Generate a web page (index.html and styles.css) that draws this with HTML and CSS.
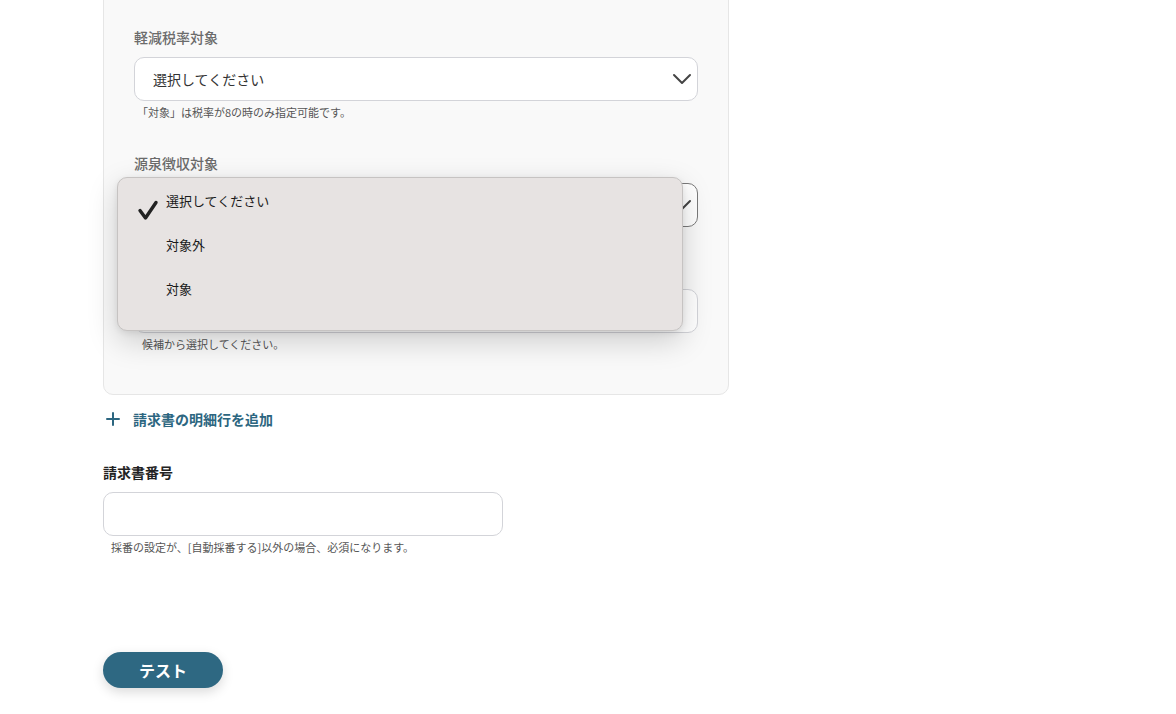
FILE: index.html
```html
<!DOCTYPE html>
<html lang="ja">
<head>
<meta charset="utf-8">
<link rel="stylesheet" href="styles.css">
</head>
<body>
<div class="page">
  <div class="card">
    <div class="group">
      <div class="label">軽減税率対象</div>
      <div class="select">
        <span>選択してください</span>
        <svg class="chev" width="20" height="14" viewBox="0 0 20 14"><path d="M2 3 L10 11 L18 3" fill="none" stroke="#444" stroke-width="2" stroke-linecap="round" stroke-linejoin="round"/></svg>
      </div>
      <div class="hint first">「対象」は税率が8の時のみ指定可能です。</div>
    </div>
    <div class="group g2">
      <div class="label">源泉徴収対象</div>
      <div class="select focused">
        <svg class="chev" width="20" height="14" viewBox="0 0 20 14"><path d="M2 3 L10 11 L18 3" fill="none" stroke="#444" stroke-width="2" stroke-linecap="round" stroke-linejoin="round"/></svg>
        <div class="menu">
          <div class="item checked">
            <svg class="check" width="22" height="22" viewBox="0 0 22 22"><path d="M3 11.5 L8.5 19 L19 3.5" fill="none" stroke="#222" stroke-width="3.4" stroke-linecap="round" stroke-linejoin="round"/></svg>
            <span>選択してください</span>
          </div>
          <div class="item"><span>対象外</span></div>
          <div class="item"><span>対象</span></div>
        </div>
      </div>
    </div>
    <div class="group g3">
      <div class="label hidden">勘定科目</div>
      <div class="select plain"></div>
      <div class="hint">候補から選択してください。</div>
    </div>
  </div>

  <div class="add">
    <svg width="14" height="14" viewBox="0 0 14 14"><path d="M7 1 V13 M1 7 H13" stroke="#2c6680" stroke-width="2" stroke-linecap="round"/></svg>
    <span>請求書の明細行を追加</span>
  </div>

  <div class="field">
    <div class="label strong">請求書番号</div>
    <div class="select input"></div>
    <div class="hint">採番の設定が、[自動採番する]以外の場合、必須になります。</div>
  </div>

  <button class="btn">テスト</button>
</div>
</body>
</html>
```
FILE: styles.css
```css
* { box-sizing: border-box; }
html, body { margin: 0; padding: 0; background: #fff; }
body {
  font-family: "Noto Sans CJK JP", "Noto Sans", sans-serif;
  color: #333;
  width: 1176px;
  height: 714px;
  overflow: hidden;
}
.page {
  padding-left: 103px;
  display: flex;
  flex-direction: column;
  align-items: flex-start;
}
.card {
  width: 626px;
  margin-top: -20px;
  padding: 46px 30px 42px 30px;
  background: #f9f9f9;
  border: 1px solid #e6e6e6;
  border-radius: 10px;
  display: flex;
  flex-direction: column;
}
.group { display: flex; flex-direction: column; }
.g2 { margin-top: 33px; }
.g3 { margin-top: 32px; }
.label {
  font-size: 14px;
  line-height: 20px;
  font-weight: 500;
  color: #6b6b6b;
  margin-bottom: 10px;
}
.label.hidden { visibility: hidden; }
.label.strong { color: #222; font-weight: 700; }
.select {
  position: relative;
  height: 44px;
  background: #fff;
  border: 1px solid #d3d4d9;
  border-radius: 10px;
  display: flex;
  align-items: center;
  padding-left: 18px;
  font-size: 14px;
  color: #333;
}
.select.focused { border-color: #7a7a7a; }
.chev { position: absolute; right: 5px; top: 14px; }
.hint {
  margin-top: 3px;
  padding-left: 8px;
  font-size: 11px;
  line-height: 16px;
  color: #555;
}
.hint.first { padding-left: 3px; }
.menu {
  position: absolute;
  left: -18px;
  top: -7px;
  width: 566px;
  height: 154px;
  background: #e7e3e2;
  border: 1px solid #c6c3c2;
  border-radius: 10px;
  box-shadow: 0 10px 30px rgba(0,0,0,0.18), 0 2px 6px rgba(0,0,0,0.08);
  padding-top: 0;
  z-index: 5;
}
.item {
  position: relative;
  height: 44px;
  display: flex;
  align-items: center;
  padding-left: 48px;
  font-size: 13px;
  font-weight: 400;
  color: #1a1a1a;
}
.item.checked { align-items: flex-start; padding-top: 13px; }
.check { position: absolute; left: 19px; top: 21px; }
.add {
  margin-top: 14px;
  margin-left: 3px;
  display: flex;
  align-items: center;
  gap: 13px;
  font-size: 14px;
  line-height: 20px;
  font-weight: 700;
  color: #2c6680;
}
.field {
  margin-top: 33px;
  width: 400px;
  display: flex;
  flex-direction: column;
}
.field .label { margin-bottom: 10px; }
.input { width: 400px; }
.btn {
  margin-top: 97px;
  width: 120px;
  height: 36px;
  border: none;
  border-radius: 18px;
  background: #2e6882;
  color: #fff;
  font-family: "Noto Sans CJK JP", sans-serif;
  font-size: 16px;
  font-weight: 700;
  box-shadow: 0 4px 12px rgba(0,0,0,0.15);
  cursor: pointer;
}
```
